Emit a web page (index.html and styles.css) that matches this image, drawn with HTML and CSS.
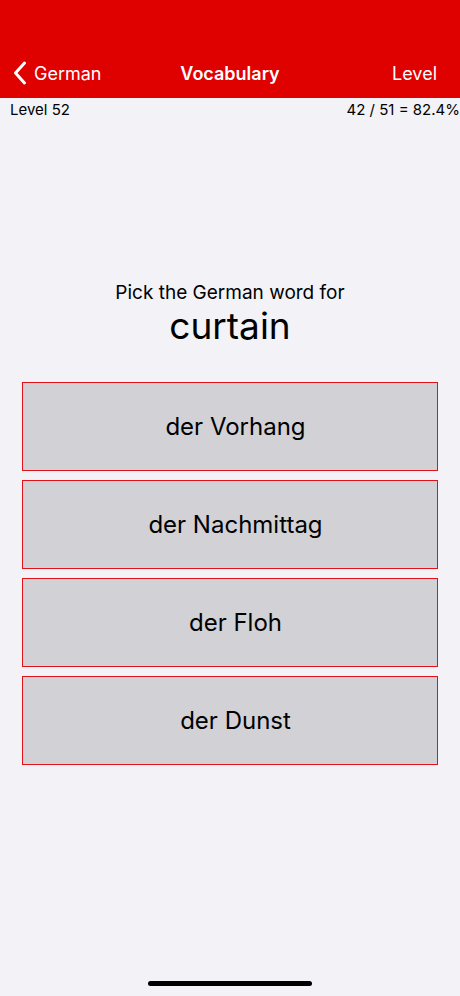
FILE: index.html
```html
<!DOCTYPE html>
<html>
<head>
<meta charset="utf-8">
<link rel="stylesheet" href="styles.css">
</head>
<body>
<div class="screen">
  <header class="navbar">
    <div class="nav-row">
      <div class="nav-back">
        <svg class="chev" width="14" height="24" viewBox="0 0 14 24"><path d="M11.5 2 L2.5 12 L11.5 22" fill="none" stroke="#fff" stroke-width="3" stroke-linecap="round" stroke-linejoin="round"/></svg>
        <span>German</span>
      </div>
      <div class="nav-title">Vocabulary</div>
      <div class="nav-right">Level</div>
    </div>
  </header>
  <div class="stats">
    <span>Level 52</span>
    <span>42 / 51 = 82.4%</span>
  </div>
  <main class="quiz">
    <div class="prompt">Pick the German word for</div>
    <div class="word">curtain</div>
    <div class="answers">
      <div class="answer">der Vorhang</div>
      <div class="answer">der Nachmittag</div>
      <div class="answer">der Floh</div>
      <div class="answer">der Dunst</div>
    </div>
  </main>
  <div class="home-bar"></div>
</div>
</body>
</html>
```
FILE: styles.css
```css
html, body {
  margin: 0;
  padding: 0;
}
body {
  background: #f2f2f7;
  font-family: Inter, "Liberation Sans", sans-serif;
  color: #000;
}
.screen {
  width: 460px;
  height: 996px;
  display: flex;
  flex-direction: column;
  position: relative;
  overflow: hidden;
}
.navbar {
  background: #df0000;
  height: 98px;
  display: flex;
  flex-direction: column;
  justify-content: flex-end;
}
.nav-row {
  height: 50px;
  display: flex;
  align-items: center;
  justify-content: space-between;
  padding: 0 14px 0 13px;
  position: relative;
  color: #fff;
  font-size: 18px;
}
.nav-back {
  display: flex;
  align-items: center;
  gap: 7px;
}
.chev {
  display: block;
}
.nav-title {
  position: absolute;
  left: 0;
  right: 0;
  text-align: center;
  font-weight: 600;
  pointer-events: none;
}
.nav-right {
  margin-right: 9px;
}
.stats {
  display: flex;
  justify-content: space-between;
  padding: 3px 0 0 10px;
  font-size: 15px;
  height: 18px;
  line-height: 18px;
}
.quiz {
  display: flex;
  flex-direction: column;
  align-items: center;
  padding-top: 162px;
}
.prompt {
  font-size: 19px;
  line-height: 23px;
}
.word {
  font-size: 37px;
  line-height: 44px;
}
.answers {
  margin-top: 34px;
  width: 416px;
  display: flex;
  flex-direction: column;
  gap: 9px;
}
.answer {
  height: 87px;
  border: 1px solid #e0121a;
  background: #d1d1d6;
  display: flex;
  align-items: center;
  justify-content: center;
  padding-left: 11px;
  font-size: 24px;
}
.home-bar {
  position: absolute;
  left: 148px;
  bottom: 10px;
  width: 164px;
  height: 5px;
  border-radius: 3px;
  background: #000;
}
```
